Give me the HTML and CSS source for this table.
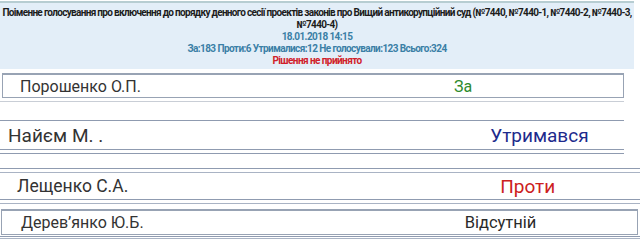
FILE: index.html
```html
<!DOCTYPE html>
<html lang="uk">
<head>
<meta charset="utf-8">
<link rel="stylesheet" href="styles.css">
</head>
<body>
<div class="header">
  <div class="title">Поіменне голосування про включення до порядку денного сесії проектів законів про Вищий антикорупційний суд (№7440, №7440-1, №7440-2, №7440-3, №7440-4)</div>
  <div class="date">18.01.2018 14:15</div>
  <div class="stats">За:183 Проти:6 Утрималися:12 Не голосували:123 Всього:324</div>
  <div class="result">Рішення не прийнято</div>
</div>

<div class="row row-1">
  <span class="name">Порошенко О.П.</span>
  <span class="vote vote-for">За</span>
</div>
<div class="rule rule-short rule-faint r1"></div>

<div class="rule rule-short r2"></div>
<div class="row row-2">
  <span class="name">Найєм М. .</span>
  <span class="vote vote-abstain">Утримався</span>
</div>
<div class="rule rule-short"></div>
<div class="rule rule-short r3"></div>

<div class="rule rule-full r4"></div>
<div class="rule rule-full r5"></div>
<div class="row row-3">
  <span class="name">Лещенко С.А.</span>
  <span class="vote vote-against">Проти</span>
</div>
<div class="rule rule-full"></div>
<div class="rule rule-full r5"></div>

<div class="row row-4">
  <span class="name">Дерев’янко Ю.Б.</span>
  <span class="vote vote-absent">Відсутній</span>
</div>
<div class="rule rule-full r6"></div>
<div class="rule rule-full r7"></div>
</body>
</html>
```

FILE: styles.css
```css
html, body {
  margin: 0;
  padding: 0;
  background: #ffffff;
}
body {
  width: 640px;
  height: 248px;
  overflow: hidden;
  font-family: Roboto, "Noto Sans", sans-serif;
}

.header {
  margin-top: 1px;
  width: 634px;
  height: 62px;
  background: #e3eef8;
  border-top: 2px solid #b7cdd2;
  text-align: center;
  font-weight: bold;
  font-size: 10px;
  letter-spacing: -0.58px;
  line-height: 12px;
  padding-top: 4px;
  box-sizing: content-box;
}
.title {
  color: #1c1c1c;
  letter-spacing: -0.68px;
}
.date,
.stats {
  color: #3a7fa6;
}
.result {
  color: #d0202a;
}

.rule {
  height: 1px;
  background: #8f9bb0;
}
.rule-short { width: 624px; }
.rule-full { width: 640px; }
.rule-faint { background: #c9ced6; }

.row {
  display: flex;
  align-items: center;
  box-sizing: border-box;
  color: #333333;
}
.row-1 {
  margin: 4px 0 0 2px;
  width: 622px;
  height: 25px;
  border: 1px solid #98a3b4;
  border-top-width: 2px;
  font-size: 16px;
  padding-left: 17px;
}
.r1 { margin-top: 3px; }
.r2 { margin-top: 18px; }
.row-2 {
  height: 28px;
  font-size: 19px;
  padding-left: 8px;
}
.r3 { margin-top: 3px; }
.r4 { margin-top: 14px; }
.r5 { margin-top: 3px; background: #a9b3c4; }
.row-3 {
  height: 26px;
  font-size: 17.5px;
  padding-left: 17px;
}
.row-4 {
  margin: 5px 0 0 1px;
  width: 637px;
  height: 26px;
  border: 1px solid #98a3b4;
  border-top-width: 2px;
  font-size: 16px;
  padding-left: 19px;
}
.r6 { margin-top: 1px; }
.r7 { margin-top: 1px; background: #a9b3c4; }

.name {
  flex: none;
}
.vote {
  flex: none;
}
.vote-for {
  color: #2e8b2e;
  margin-left: 313px;
}
.vote-abstain {
  color: #1d2a8c;
  margin-left: 387px;
}
.vote-against {
  color: #cc2020;
  font-size: 19px;
  margin-left: 372px;
}
.vote-absent {
  color: #2a2a2a;
  font-size: 16.5px;
  margin-left: 321px;
}
```
